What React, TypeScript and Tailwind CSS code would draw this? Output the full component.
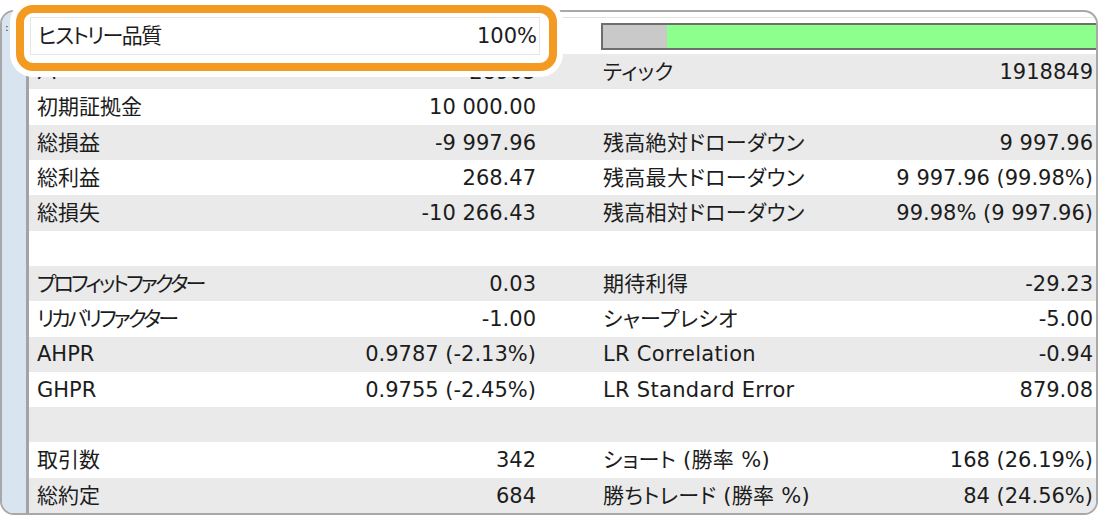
type Row = { l?: string; lv?: string; r?: string; rv?: string; lt?: string; rt?: string; bar?: boolean };

const rows: Row[] = [
  { bar: true },
  { l: "バー", lv: "28905", r: "ティック", rv: "1918849", rt: "tracking-[-3px]" },
  { l: "初期証拠金", lv: "10 000.00" },
  { l: "総損益", lv: "-9 997.96", r: "残高絶対ドローダウン", rv: "9 997.96", rt: "tracking-[-0.8px]" },
  { l: "総利益", lv: "268.47", r: "残高最大ドローダウン", rv: "9 997.96 (99.98%)", rt: "tracking-[-0.8px]" },
  { l: "総損失", lv: "-10 266.43", r: "残高相対ドローダウン", rv: "99.98% (9 997.96)", rt: "tracking-[-0.8px]" },
  {},
  { l: "プロフィットファクター", lv: "0.03", r: "期待利得", rv: "-29.23", lt: "tracking-[-2.8px]" },
  { l: "リカバリファクター", lv: "-1.00", r: "シャープレシオ", rv: "-5.00", lt: "tracking-[-2.9px]", rt: "tracking-[-1.7px]" },
  { l: "AHPR", lv: "0.9787 (-2.13%)", r: "LR Correlation", rv: "-0.94" },
  { l: "GHPR", lv: "0.9755 (-2.45%)", r: "LR Standard Error", rv: "879.08" },
  {},
  { l: "取引数", lv: "342", r: "ショート (勝率 %)", rv: "168 (26.19%)" },
  { l: "総約定", lv: "684", r: "勝ちトレード (勝率 %)", rv: "84 (24.56%)" },
];

export default function App() {
  return (
    <div className="relative w-[1100px] h-[516px] bg-white pt-[10px] overflow-hidden font-['DejaVu_Sans','Noto_Sans_CJK_JP',sans-serif] text-[21px] text-[#1c1c1c] [font-feature-settings:'palt']">
      {/* window frame */}
      <div className="flex w-[1098px] h-[505px] border-2 border-[#a8a8a8] rounded-[14px] overflow-hidden">
        <div className="w-[24px] bg-[#d8e4f0] flex flex-col">
          <span className="text-[11px] leading-none pl-[3px] pt-[10px] text-[#333]">:</span>
        </div>
        <div className="w-[3px] bg-[#a3a3a3]" />
        <div className="flex-1 flex flex-col">
          <div className="h-[5px]" />
          <div className="h-px bg-[#e2e2e2]" />
          <div className="h-[1.5px]" />
          {rows.map((row, i) => (
            <div
              key={i}
              className={`flex items-center h-[35.3px] shrink-0 ${i % 2 === 1 ? "bg-[#eaeaea]" : "bg-white"}`}
            >
              <div className="w-[515px] flex justify-between px-2 pt-[2px] whitespace-nowrap">
                <span className={row.lt}>{i === 0 ? "" : row.l}</span>
                <span>{i === 0 ? "" : row.lv}</span>
              </div>
              <div className="flex-1 flex justify-between items-center pl-[59px] pr-[3px] whitespace-nowrap">
                {row.bar ? (
                  <div className="flex flex-1 h-[27px] border-2 border-[#6e6e6e] border-r-0 -mr-[8px] ml-[-2px]">
                    <div className="w-[64px] bg-[#c9c9c9]" />
                    <div className="flex-1 bg-[#8cff8c]" />
                  </div>
                ) : (
                  <>
                    <span className={`pt-[2px] tracking-[0.3px] ${row.rt ?? ""}`}>{row.r}</span>
                    <span className="pt-[2px]">{row.rv}</span>
                  </>
                )}
              </div>
            </div>
          ))}
        </div>
      </div>

      {/* highlight callout */}
      <div className="absolute left-[16px] top-[5px] w-[541px] h-[66px] rounded-[17px] border-[8px] border-[#f39a22] bg-white shadow-[0_0_0_6px_#fff]">
        <div className="ml-[6px] mt-[4px] w-[510px] h-[38px] border border-[#e6e6e6] flex items-center justify-between pl-[7px] pr-[2px] pt-[2px]">
          <span className="tracking-[-1.6px]">ヒストリー品質</span>
          <span>100%</span>
        </div>
      </div>
    </div>
  );
}
